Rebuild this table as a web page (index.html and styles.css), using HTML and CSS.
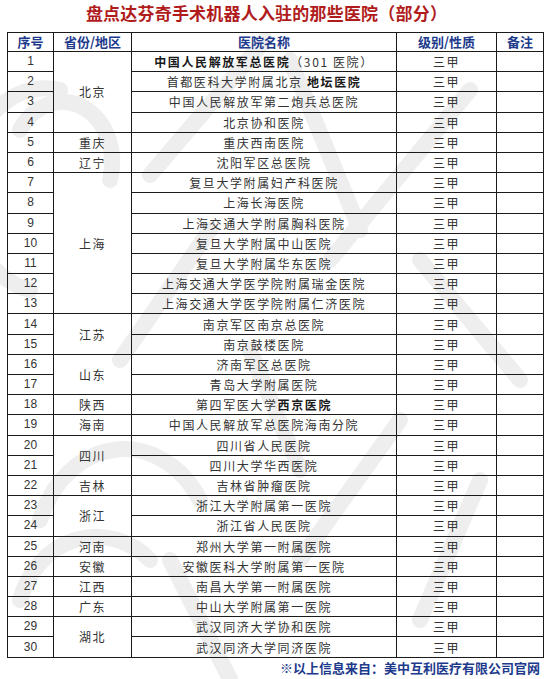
FILE: index.html
```html
<!DOCTYPE html>
<html lang="zh-CN">
<head>
<meta charset="utf-8">
<title>盘点达芬奇手术机器人入驻的那些医院（部分）</title>
<link rel="stylesheet" href="styles.css">
</head>
<body>
<div class="page">
  <svg class="watermark" width="549" height="679" viewBox="0 0 549 679" aria-hidden="true">
    <g fill="none" stroke="#eeeeee" stroke-width="16" stroke-linecap="round">
      <path d="M265 40 L150 175"/>
      <path d="M290 60 L360 230"/>
      <path d="M470 90 L330 260"/>
      <path d="M60 90 A70 90 0 0 0 30 290"/>
      <path d="M20 130 A50 60 0 0 1 110 180"/>
      <path d="M210 230 L120 360"/>
      <path d="M420 260 L520 380"/>
      <path d="M250 350 L300 470"/>
      <path d="M400 420 L300 560"/>
      <path d="M40 520 A90 110 0 0 1 200 500"/>
      <path d="M20 600 A80 90 0 0 1 150 560"/>
      <path d="M170 560 L230 679"/>
      <path d="M480 480 L420 620"/>
    </g>
  </svg>
  <h1 class="title">盘点达芬奇手术机器人入驻的那些医院（部分）</h1>
  <table class="list">
    <colgroup>
      <col class="c-no"><col class="c-prov"><col class="c-name"><col class="c-level"><col class="c-note">
    </colgroup>
    <thead>
      <tr><th>序号</th><th>省份/地区</th><th>医院名称</th><th>级别/性质</th><th>备注</th></tr>
    </thead>
    <tbody>
      <tr><td class="no">1</td><td rowspan="4">北京</td><td><b>中国人民解放军总医院</b>（301 医院）</td><td>三甲</td><td></td></tr>
      <tr><td class="no">2</td><td>首都医科大学附属北京 <b>地坛医院</b></td><td>三甲</td><td></td></tr>
      <tr><td class="no">3</td><td>中国人民解放军第二炮兵总医院</td><td>三甲</td><td></td></tr>
      <tr><td class="no">4</td><td>北京协和医院</td><td>三甲</td><td></td></tr>
      <tr><td class="no">5</td><td>重庆</td><td>重庆西南医院</td><td>三甲</td><td></td></tr>
      <tr><td class="no">6</td><td>辽宁</td><td>沈阳军区总医院</td><td>三甲</td><td></td></tr>
      <tr><td class="no">7</td><td rowspan="7">上海</td><td>复旦大学附属妇产科医院</td><td>三甲</td><td></td></tr>
      <tr><td class="no">8</td><td>上海长海医院</td><td>三甲</td><td></td></tr>
      <tr><td class="no">9</td><td>上海交通大学附属胸科医院</td><td>三甲</td><td></td></tr>
      <tr><td class="no">10</td><td>复旦大学附属中山医院</td><td>三甲</td><td></td></tr>
      <tr><td class="no">11</td><td>复旦大学附属华东医院</td><td>三甲</td><td></td></tr>
      <tr><td class="no">12</td><td>上海交通大学医学院附属瑞金医院</td><td>三甲</td><td></td></tr>
      <tr><td class="no">13</td><td>上海交通大学医学院附属仁济医院</td><td>三甲</td><td></td></tr>
      <tr><td class="no">14</td><td rowspan="2">江苏</td><td>南京军区南京总医院</td><td>三甲</td><td></td></tr>
      <tr><td class="no">15</td><td>南京鼓楼医院</td><td>三甲</td><td></td></tr>
      <tr><td class="no">16</td><td rowspan="2">山东</td><td>济南军区总医院</td><td>三甲</td><td></td></tr>
      <tr><td class="no">17</td><td>青岛大学附属医院</td><td>三甲</td><td></td></tr>
      <tr><td class="no">18</td><td>陕西</td><td>第四军医大学<b>西京医院</b></td><td>三甲</td><td></td></tr>
      <tr><td class="no">19</td><td>海南</td><td>中国人民解放军总医院海南分院</td><td>三甲</td><td></td></tr>
      <tr><td class="no">20</td><td rowspan="2">四川</td><td>四川省人民医院</td><td>三甲</td><td></td></tr>
      <tr><td class="no">21</td><td>四川大学华西医院</td><td>三甲</td><td></td></tr>
      <tr><td class="no">22</td><td>吉林</td><td>吉林省肿瘤医院</td><td>三甲</td><td></td></tr>
      <tr><td class="no">23</td><td rowspan="2">浙江</td><td>浙江大学附属第一医院</td><td>三甲</td><td></td></tr>
      <tr><td class="no">24</td><td>浙江省人民医院</td><td>三甲</td><td></td></tr>
      <tr><td class="no">25</td><td>河南</td><td>郑州大学第一附属医院</td><td>三甲</td><td></td></tr>
      <tr><td class="no">26</td><td>安徽</td><td>安徽医科大学附属第一医院</td><td>三甲</td><td></td></tr>
      <tr><td class="no">27</td><td>江西</td><td>南昌大学第一附属医院</td><td>三甲</td><td></td></tr>
      <tr><td class="no">28</td><td>广东</td><td>中山大学附属第一医院</td><td>三甲</td><td></td></tr>
      <tr><td class="no">29</td><td rowspan="2">湖北</td><td>武汉同济大学协和医院</td><td>三甲</td><td></td></tr>
      <tr><td class="no">30</td><td>武汉同济大学同济医院</td><td>三甲</td><td></td></tr>
    </tbody>
  </table>
  <p class="source">※以上信息来自：美中互利医疗有限公司官网</p>
</div>
</body>
</html>
```
FILE: styles.css
```css
html, body {
  margin: 0;
  padding: 0;
  background: #ffffff;
}
.page {
  position: relative;
  width: 549px;
  height: 679px;
  overflow: hidden;
  font-family: "Noto Sans CJK SC", "Liberation Sans", sans-serif;
}
.watermark {
  position: absolute;
  left: 0;
  top: 0;
  z-index: 0;
}
.title, .list, .source {
  position: relative;
  z-index: 1;
}
.title {
  margin: 0;
  height: 32px;
  padding-right: 16px;
  line-height: 26px;
  text-align: center;
  font-size: 17px;
  font-weight: bold;
  color: #b01c1c;
  letter-spacing: 0.2px;
}
.list {
  margin-left: 7px;
  border-collapse: collapse;
  table-layout: fixed;
  width: 536px;
  color: #333333;
}
.c-no { width: 46px; }
.c-prov { width: 78px; }
.c-name { width: 265px; }
.c-level { width: 100px; }
.c-note { width: 47px; }
.list th, .list td {
  border: 1px solid #1a1a1a;
  padding: 0;
  text-align: center;
  vertical-align: middle;
  white-space: nowrap;
  overflow: hidden;
}
.list th {
  height: 18px;
  font-size: 13px;
  line-height: 18px;
  font-weight: bold;
  color: #1d3a8c;
}
.list td {
  height: 19.2px;
  font-size: 12px;
  line-height: 19px;
  letter-spacing: 1.6px;
}
.list td.no {
  font-family: "Liberation Sans", sans-serif;
  letter-spacing: 0;
}
.list td b {
  font-weight: bold;
  color: #1a1a1a;
}
.source {
  margin: 1px 9px 0 0;
  text-align: right;
  font-size: 13px;
  font-weight: bold;
  color: #1d3a8c;
  line-height: 18px;
}
```
